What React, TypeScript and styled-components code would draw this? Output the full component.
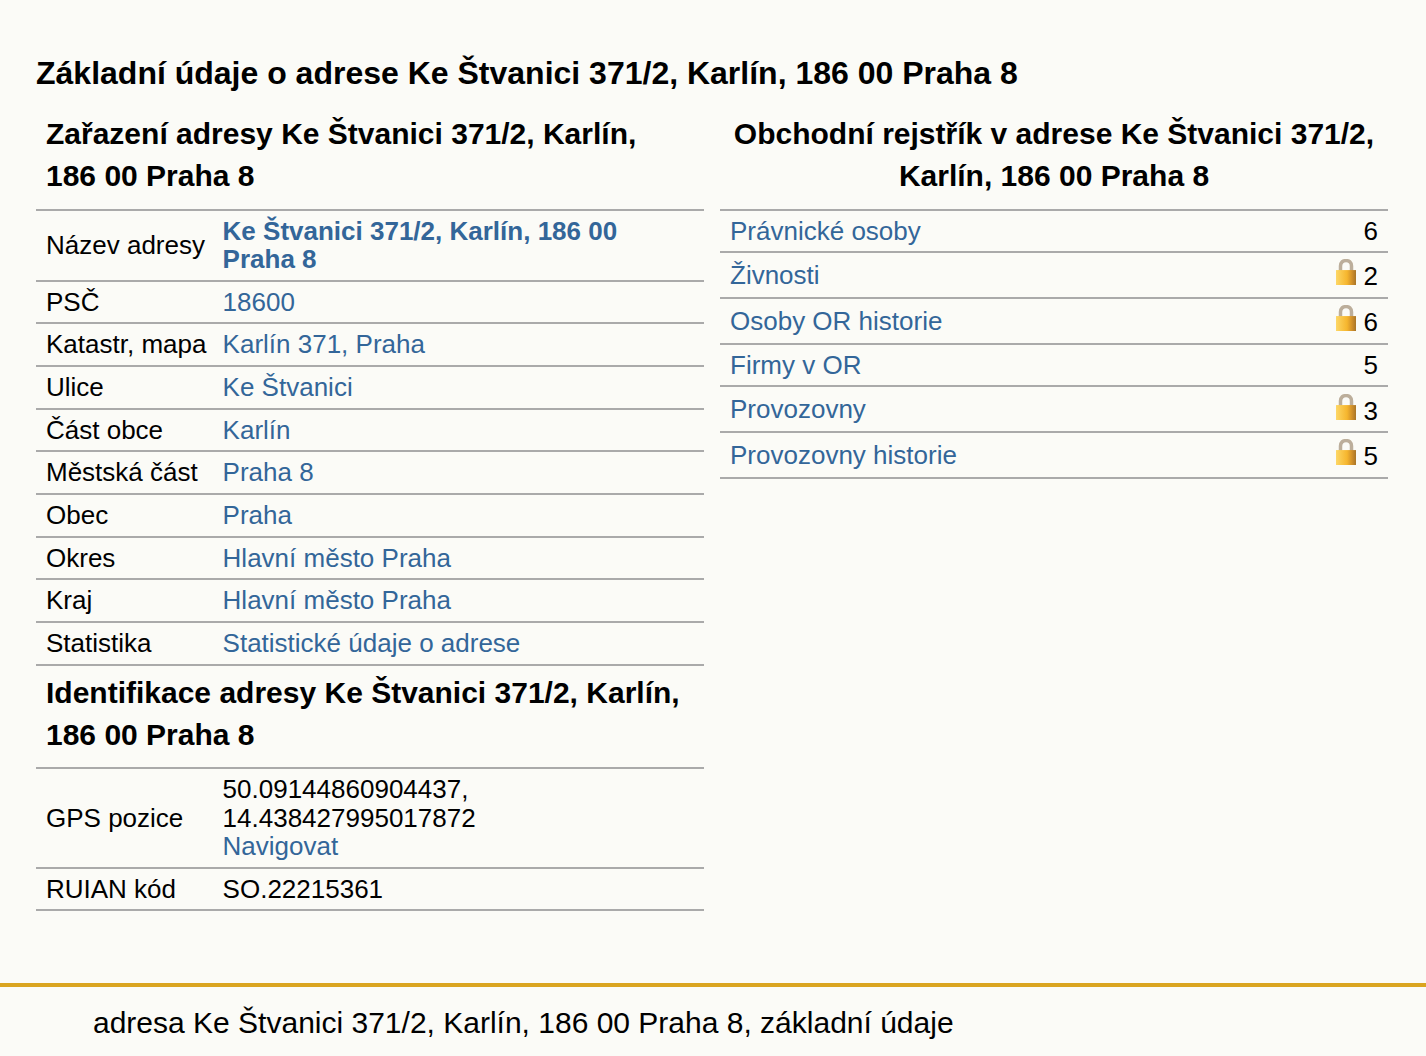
import React from "react";
import styled, { createGlobalStyle } from "styled-components";

const ADDRESS = "Ke Štvanici 371/2, Karlín, 186 00 Praha 8";

interface InfoRow {
  label: string;
  value: string;
}

interface CountRow {
  label: string;
  count: number;
  locked?: boolean;
}

const placeRows: InfoRow[] = [
  { label: "PSČ", value: "18600" },
  { label: "Katastr, mapa", value: "Karlín 371, Praha" },
  { label: "Ulice", value: "Ke Štvanici" },
  { label: "Část obce", value: "Karlín" },
  { label: "Městská část", value: "Praha 8" },
  { label: "Obec", value: "Praha" },
  { label: "Okres", value: "Hlavní město Praha" },
  { label: "Kraj", value: "Hlavní město Praha" },
  { label: "Statistika", value: "Statistické údaje o adrese" },
];

const registerRows: CountRow[] = [
  { label: "Právnické osoby", count: 6 },
  { label: "Živnosti", count: 2, locked: true },
  { label: "Osoby OR historie", count: 6, locked: true },
  { label: "Firmy v OR", count: 5 },
  { label: "Provozovny", count: 3, locked: true },
  { label: "Provozovny historie", count: 5, locked: true },
];

const LockIcon = () => (
  <LockSvg viewBox="0 0 20 26" aria-hidden="true">
    <defs>
      <linearGradient id="lockBody" x1="0" y1="0" x2="1" y2="0">
        <stop offset="0" stopColor="#fdd766" />
        <stop offset="0.55" stopColor="#f6b62e" />
        <stop offset="0.8" stopColor="#d1902a" />
        <stop offset="1" stopColor="#a87528" />
      </linearGradient>
    </defs>
    <path
      d="M4.5 12 V7 C4.5 3.2 7 1.5 10 1.5 C13 1.5 15.5 3.2 15.5 7 V12"
      fill="none"
      stroke="#bcae9b"
      strokeWidth="3.5"
    />
    <rect x="0" y="11" width="20" height="15" fill="url(#lockBody)" />
  </LockSvg>
);

const App = () => {
  return (
    <Page>
      <GlobalStyle />
      <Main>
        <Title>Základní údaje o adrese {ADDRESS}</Title>
        <Columns>
          <section>
            <SectionTitle>Zařazení adresy {ADDRESS}</SectionTitle>
            <InfoTable>
              <tbody>
                <tr>
                  <LabelCell>Název adresy</LabelCell>
                  <ValueCell>
                    <StrongLink href="#">{ADDRESS}</StrongLink>
                  </ValueCell>
                </tr>
                {placeRows.map((row) => (
                  <tr key={row.label}>
                    <LabelCell>{row.label}</LabelCell>
                    <ValueCell>
                      <TextLink href="#">{row.value}</TextLink>
                    </ValueCell>
                  </tr>
                ))}
              </tbody>
            </InfoTable>
            <SectionTitle>Identifikace adresy {ADDRESS}</SectionTitle>
            <InfoTable>
              <tbody>
                <tr>
                  <LabelCell>GPS pozice</LabelCell>
                  <ValueCell>
                    50.09144860904437,
                    <br />
                    14.438427995017872
                    <br />
                    <TextLink href="#">Navigovat</TextLink>
                  </ValueCell>
                </tr>
                <tr>
                  <LabelCell>RUIAN kód</LabelCell>
                  <ValueCell>SO.22215361</ValueCell>
                </tr>
              </tbody>
            </InfoTable>
          </section>
          <section>
            <SectionTitle $center>Obchodní rejstřík v adrese {ADDRESS}</SectionTitle>
            <InfoTable>
              <tbody>
                {registerRows.map((row) => (
                  <tr key={row.label}>
                    <CountLabel>
                      <TextLink href="#">{row.label}</TextLink>
                    </CountLabel>
                    <CountValue>
                      {row.locked && <LockIcon />}
                      {row.count}
                    </CountValue>
                  </tr>
                ))}
              </tbody>
            </InfoTable>
          </section>
        </Columns>
      </Main>
      <Footer>adresa {ADDRESS}, základní údaje</Footer>
    </Page>
  );
};

const GlobalStyle = createGlobalStyle`
  html, body {
    margin: 0;
    padding: 0;
    background: #fbfbf7;
  }
  body {
    color: #000;
    font-family: "Liberation Sans", Arial, sans-serif;
    font-size: 26px;
  }
`;

const Page = styled.div`
  width: 1426px;
  height: 1056px;
  overflow: hidden;
  display: flex;
  flex-direction: column;
`;

const Main = styled.main`
  flex: 1;
  padding: 0 38px 0 36px;
`;

const Title = styled.h1`
  margin: 0 0 13px;
  padding-top: 52px;
  font-size: 32px;
  line-height: 42px;
  font-weight: bold;
`;

const Columns = styled.div`
  display: grid;
  grid-template-columns: 668px 668px;
  column-gap: 16px;
`;

const SectionTitle = styled.h2<{ $center?: boolean }>`
  margin: 0;
  padding: 6px 10px 11.5px;
  font-size: 30px;
  line-height: 42px;
  font-weight: bold;
  text-align: ${(props) => (props.$center ? "center" : "left")};
`;

const InfoTable = styled.table`
  width: 100%;
  border-collapse: collapse;
  border-top: 2px solid #aaaaaa;
  tr {
    border-bottom: 2px solid #aaaaaa;
  }
`;

const LabelCell = styled.td`
  width: 161.6px;
  padding: 6.11px 5px 6.11px 10px;
  line-height: 28.44px;
  white-space: nowrap;
`;

const ValueCell = styled.td`
  padding: 6.11px 10px;
  line-height: 28.44px;
`;

const CountLabel = styled.td`
  padding: 6.11px 10px;
  line-height: 28.44px;
`;

const CountValue = styled.td`
  padding: 6.11px 10px;
  line-height: 28.44px;
  text-align: right;
  white-space: nowrap;
`;

const TextLink = styled.a`
  color: #336699;
  text-decoration: none;
`;

const StrongLink = styled(TextLink)`
  font-weight: bold;
`;

const LockSvg = styled.svg`
  width: 20px;
  height: 26.15px;
  margin-right: 8px;
`;

const Footer = styled.footer`
  flex: none;
  height: 73px;
  box-sizing: border-box;
  border-top: 4px solid #daa520;
  padding: 15px 0 0 93px;
  font-size: 30px;
  line-height: 42px;
`;

export default App;
